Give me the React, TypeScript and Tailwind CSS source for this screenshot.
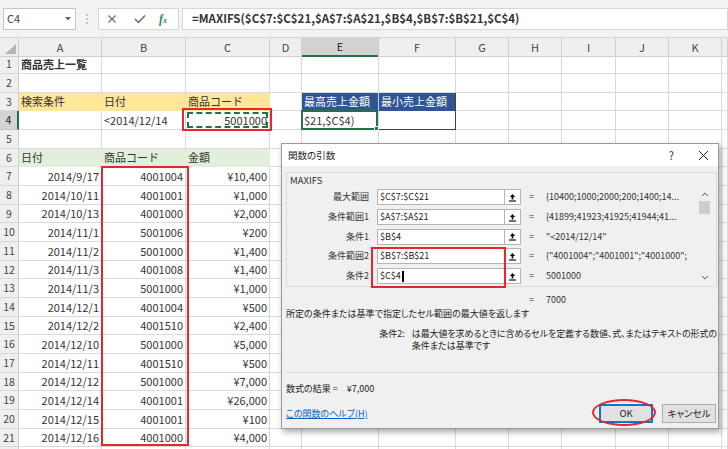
import React from "react";

const GRID =
  "grid grid-cols-[19px_83px_84px_84px_32px_77px_77px_53px_53px_54px_53px_53px_1fr]";

type Kind = "none" | "orange" | "green" | "blueL" | "blue" | "e4" | "f4" | "c4";
type C = { t?: string; r?: boolean; b?: boolean; kind?: Kind };

const data: [string, string, string][] = [
  ["2014/9/17", "4001004", "¥10,400"],
  ["2014/10/11", "4001001", "¥1,000"],
  ["2014/10/13", "4001000", "¥2,000"],
  ["2014/11/1", "5001006", "¥200"],
  ["2014/11/2", "5001000", "¥1,400"],
  ["2014/11/3", "4001008", "¥1,400"],
  ["2014/11/3", "5001000", "¥1,000"],
  ["2014/12/1", "4001004", "¥500"],
  ["2014/12/2", "4001510", "¥2,400"],
  ["2014/12/10", "5001000", "¥5,000"],
  ["2014/12/11", "4001510", "¥500"],
  ["2014/12/12", "5001000", "¥7,000"],
  ["2014/12/14", "4001001", "¥26,000"],
  ["2014/12/15", "4001001", "¥100"],
  ["2014/12/16", "4001000", "¥4,000"],
];

function rowCells(n: number): C[] {
  const cells: C[] = Array.from({ length: 12 }, () => ({}));
  if (n === 1) cells[0] = { t: "商品売上一覧", b: true };
  if (n === 3) {
    cells[0] = { t: "検索条件", kind: "orange" };
    cells[1] = { t: "日付", kind: "orange" };
    cells[2] = { t: "商品コード", kind: "orange" };
    cells[4] = { t: "最高売上金額", kind: "blueL" };
    cells[5] = { t: "最小売上金額", kind: "blue" };
  }
  if (n === 4) {
    cells[1] = { t: "<2014/12/14" };
    cells[2] = { t: "5001000", r: true, kind: "c4" };
    cells[4] = { t: "$21,$C$4)", kind: "e4" };
    cells[5] = { kind: "f4" };
  }
  if (n === 6) {
    cells[0] = { t: "日付", kind: "green" };
    cells[1] = { t: "商品コード", kind: "green" };
    cells[2] = { t: "金額", kind: "green" };
  }
  if (n >= 7 && n <= 21) {
    const d = data[n - 7];
    cells[0] = { t: d[0], r: true };
    cells[1] = { t: d[1], r: true };
    cells[2] = { t: d[2], r: true };
  }
  return cells;
}

const kindCls: Record<Kind, string> = {
  none: "border-r-[#dadada] border-b-[#dadada] text-[#333]",
  orange: "bg-[#ffe699] border-r-[#ffe699] border-b-[#ffe699] text-[#333]",
  green: "bg-[#e2efda] border-r-[#e2efda] border-b-[#e2efda] text-[#333]",
  blueL: "bg-[#2f5597] border-r-[#c7d0e6] border-b-[#2f5597] text-white",
  blue: "bg-[#2f5597] border-r-[#404040] border-b-[#2f5597] text-white",
  e4: "border-r-[#dadada] border-b-[#404040] text-[#333]",
  f4: "border-r-[#404040] border-b-[#404040] text-[#333]",
  c4: "border-r-[#dadada] border-b-[#dadada] text-[#333]",
};

const HEIGHTS = ["h-[19px]", "h-[19px]", "h-[18px]"];

function SheetRow({ n }: { n: number }) {
  const cells = rowCells(n);
  const h = HEIGHTS[(n - 1) % 3];
  const sel = n === 4;
  return (
    <div className={`${GRID} ${h}`}>
      <div
        className={
          sel
            ? "bg-[#d3d3d3] border-r-2 border-r-[#217346] border-b border-b-[#c6c6c6] flex items-center justify-center text-[10.5px] text-[#222]"
            : "bg-[#efefef] border-r border-r-[#cfcfcf] border-b border-b-[#dadada] flex items-center justify-center text-[10.5px] text-[#444]"
        }
      >
        {n <= 21 ? n : ""}
      </div>
      {cells.map((c, i) => {
        const k = c.kind ?? "none";
        return (
          <div
            key={i}
            className={`relative border-r border-b flex items-center whitespace-nowrap px-[2px] text-[11px] ${
              c.r ? "justify-end" : "justify-start"
            } ${c.b ? "font-bold" : ""} ${kindCls[k]}`}
          >
            {k === "c4" && (
              <div className="absolute inset-[1px] border-2 border-dashed border-[#217346]" />
            )}
            {k === "e4" && (
              <div className="absolute -left-[1px] -top-[1px] -right-[0px] -bottom-[1px] border-2 border-[#217346]">
                <div className="absolute -right-[3px] -bottom-[3px] w-[5px] h-[5px] bg-[#217346] border border-white" />
              </div>
            )}
            <span className="relative">{c.t}</span>
          </div>
        );
      })}
    </div>
  );
}

function UpBtnIcon() {
  return (
    <svg width="9" height="9" viewBox="0 0 9 9">
      <path d="M4.5 1 L1.8 4 H3.6 V6.5 H5.4 V4 H7.2 Z" fill="#111" />
      <rect x="1" y="7.4" width="7" height="1.2" fill="#111" />
    </svg>
  );
}

const args: [string, string, string][] = [
  ["最大範囲", "$C$7:$C$21", "{10400;1000;2000;200;1400;14..."],
  ["条件範囲1", "$A$7:$A$21", "{41899;41923;41925;41944;41..."],
  ["条件1", "$B$4", "\"<2014/12/14\""],
  ["条件範囲2", "$B$7:$B$21", "{\"4001004\";\"4001001\";\"4001000\";"],
  ["条件2", "$C$4", "5001000"],
];
const ARGH = ["h-[20px]", "h-[20px]", "h-[19px]", "h-[20px]", "h-[20px]"];

function Dialog() {
  return (
    <div className="absolute left-[281px] top-[143px] w-[438px] h-[286px] bg-[#f0f0f0] border border-[#9a9a9a] shadow-[2px_3px_6px_rgba(0,0,0,0.35)] flex flex-col text-[9px] text-[#222] [font-feature-settings:'palt']">
      <div className="h-[22px] shrink-0 bg-white flex items-center pl-[6px] pr-[9px]">
        <span className="text-[9.5px]">関数の引数</span>
        <span className="ml-auto text-[11px] text-[#333]">?</span>
        <svg className="ml-[24px]" width="11" height="11" viewBox="0 0 11 11">
          <path d="M1 1 L10 10 M10 1 L1 10" stroke="#222" strokeWidth="1" />
        </svg>
      </div>
      <div className="flex-1 flex flex-col pl-[4px] pr-[1px] pt-[6px]">
        <div className="h-[115px] border border-[#dcdcdc] flex flex-col shrink-0">
          <div className="h-[14px] pl-[3px] flex items-center text-[9.5px] text-[#333]">MAXIFS</div>
          <div className="flex flex-1">
            <div className="flex-1 flex flex-col">
              {args.map((a, i) => (
                <div key={i} className={`${ARGH[i]} flex items-center`}>
                  <div className="w-[82px] text-right text-[#333]">{a[0]}</div>
                  <div className="ml-[8px] w-[128px] h-[16px] bg-white border border-[#b4b4b4] flex items-center pl-[2px] text-[#222]">
                    {a[1]}
                    {i === 4 && <span className="ml-[1px] w-[2px] h-[11px] bg-black" />}
                  </div>
                  <div className="w-[16px] h-[16px] bg-white border border-l-0 border-[#b4b4b4] flex items-center justify-center">
                    <UpBtnIcon />
                  </div>
                  <div className="ml-[8px] w-[17px] text-[#333]">=</div>
                  <div className="whitespace-nowrap text-[#333]">{a[2]}</div>
                </div>
              ))}
            </div>
            <div className="w-[13px] mr-[5px] flex flex-col items-center">
              <svg className="mt-[5px]" width="8" height="5" viewBox="0 0 8 5">
                <path d="M1 4 L4 1 L7 4" stroke="#555" strokeWidth="1" fill="none" />
              </svg>
              <div className="mt-[4px] w-[11px] h-[13px] bg-[#cdcdcd]" />
              <svg className="mt-auto mb-[6px]" width="8" height="5" viewBox="0 0 8 5">
                <path d="M1 1 L4 4 L7 1" stroke="#555" strokeWidth="1" fill="none" />
              </svg>
            </div>
          </div>
        </div>
        <div className="mt-[6px] h-[14px] flex items-center pl-[243px] text-[#333]">
          <span className="w-[17px]">=</span>
          <span>7000</span>
        </div>
        <div className="mt-[1px] h-[12px] flex items-center text-[#222]">
          所定の条件または基準で指定したセル範囲の最大値を返します
        </div>
        <div className="mt-[8px] h-[24px] flex">
          <div className="w-[146px] text-right leading-[12px]">条件2:</div>
          <div className="ml-[7px] leading-[12px] text-[#222]">
            <div className="whitespace-nowrap tracking-[-0.1px]">は最大値を求めるときに含めるセルを定義する数値、式、またはテキストの形式の</div>
            <div>条件または基準です</div>
          </div>
        </div>
        <div className="mt-[20px] h-px bg-[#dcdcdc]" />
        <div className="mt-[10px] h-[12px] flex items-center">
          <span>数式の結果 =</span>
          <span className="ml-[9px]">¥7,000</span>
        </div>
        <div className="mt-[9px] h-[19px] flex items-center pr-[1px]">
          <span className="text-[#0066cc] underline">この関数のヘルプ(H)</span>
          <div className="ml-auto w-[54px] h-[19px] bg-[#e1e1e1] border-2 border-[#0078d7] flex items-center justify-center text-[9.5px]">
            OK
          </div>
          <div className="ml-[9px] w-[54px] h-[19px] bg-[#e1e1e1] border border-[#adadad] flex items-center justify-center text-[9.5px]">
            キャンセル
          </div>
        </div>
      </div>
    </div>
  );
}

export default function App() {
  const colLetters = ["A", "B", "C", "D", "E", "F", "G", "H", "I", "J", "K", ""];
  return (
    <div className="relative w-[728px] h-[449px] overflow-hidden bg-white font-['Noto_Sans_CJK_JP','Noto_Sans',sans-serif]">
      {/* formula bar */}
      <div className="h-[38px] bg-[#f3f3f3] border-b border-[#d4d4d4] flex items-center">
        <div className="ml-[3px] w-[73px] h-[22px] bg-white border border-[#c6c6c6] flex items-center justify-between pl-[3px] pr-[4px]">
          <span className="text-[11px] text-[#444]">C4</span>
          <svg width="6" height="4" viewBox="0 0 6 4">
            <path d="M0 0 H6 L3 3.5 Z" fill="#666" />
          </svg>
        </div>
        <div className="ml-[10px] flex flex-col gap-[2px]">
          <span className="w-[2px] h-[2px] bg-[#c8c8c8]" />
          <span className="w-[2px] h-[2px] bg-[#c8c8c8]" />
          <span className="w-[2px] h-[2px] bg-[#c8c8c8]" />
        </div>
        <div className="ml-[10px] w-[81px] h-[22px] bg-white border border-[#d6d6d6] flex items-center">
          <svg className="ml-[8px]" width="10" height="10" viewBox="0 0 10 10">
            <path d="M1.5 1.5 L8.5 8.5 M8.5 1.5 L1.5 8.5" stroke="#666" strokeWidth="1.2" />
          </svg>
          <svg className="ml-[17px]" width="12" height="10" viewBox="0 0 12 10">
            <path d="M1 5 L4.5 8.5 L11 1.5" stroke="#666" strokeWidth="1.4" fill="none" />
          </svg>
          <span className="ml-[13px] text-[12px] italic font-bold text-[#2e8b57] font-['Liberation_Serif',serif]">
            f<span className="text-[8px]">x</span>
          </span>
        </div>
        <div className="ml-[3px] flex-1 h-[22px] bg-white border border-[#d6d6d6] flex items-center pl-[9px] text-[11.5px] font-semibold text-[#333] whitespace-nowrap">
          =MAXIFS($C$7:$C$21,$A$7:$A$21,$B$4,$B$7:$B$21,$C$4)
        </div>
      </div>

      {/* column headers */}
      <div className={`${GRID} h-[17px]`}>
        <div className="bg-[#efefef] border-r border-b border-[#cfcfcf] relative">
          <svg className="absolute right-[2px] bottom-[2px]" width="11" height="10" viewBox="0 0 11 10">
            <path d="M11 0 V10 H0 Z" fill="#b5b5b5" />
          </svg>
        </div>
        {colLetters.map((l, i) =>
          l === "E" ? (
            <div
              key={i}
              className="bg-[#d3d3d3] border-r border-r-[#c6c6c6] border-b-2 border-b-[#217346] flex items-center justify-center text-[11px] text-[#222]"
            >
              {l}
            </div>
          ) : (
            <div
              key={i}
              className="bg-[#efefef] border-r border-b border-[#cfcfcf] flex items-center justify-center text-[11px] text-[#444]"
            >
              {l}
            </div>
          )
        )}
      </div>

      {/* rows */}
      {Array.from({ length: 22 }, (_, i) => (
        <SheetRow key={i} n={i + 1} />
      ))}

      <Dialog />

      {/* annotations */}
      <div className="absolute left-[182px] top-[108px] w-[90px] h-[23px] border-2 border-[#e8262b]" />
      <div className="absolute left-[101px] top-[166px] w-[88px] h-[280px] border-2 border-[#e8262b]" />
      <div className="absolute left-[371px] top-[247px] w-[135px] h-[41px] border-2 border-[#e8262b]" />
      <div className="absolute left-[592px] top-[399px] w-[64px] h-[27px] border-2 border-[#e8262b] rounded-[50%]" />
    </div>
  );
}
